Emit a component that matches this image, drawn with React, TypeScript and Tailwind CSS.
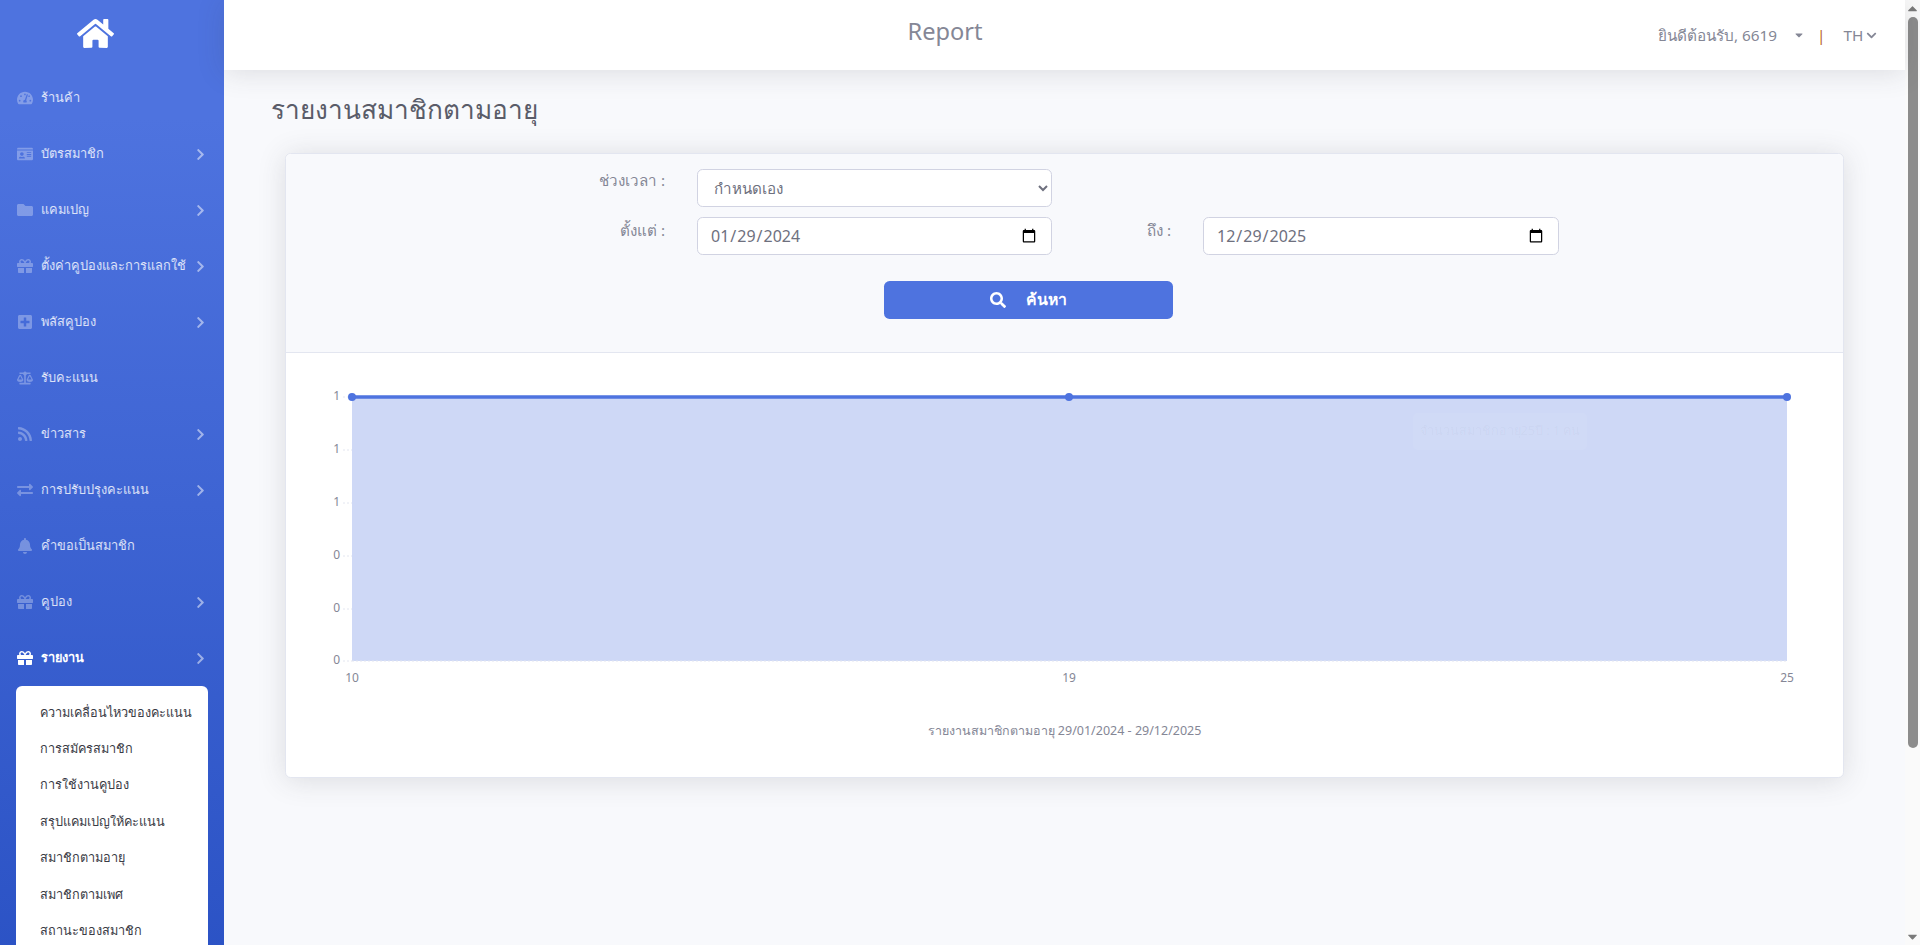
import React from 'react';
import { FaHome, FaTachometerAlt, FaIdCard, FaFolder, FaGift, FaPlusSquare, FaBalanceScale, FaRss, FaExchangeAlt, FaBell, FaChevronRight, FaSearch, FaCaretDown, FaChevronDown, FaCaretUp } from 'react-icons/fa';

const navItems = [
    { label: 'ร้านค้า', icon: FaTachometerAlt, arrow: false },
    { label: 'บัตรสมาชิก', icon: FaIdCard, arrow: true },
    { label: 'แคมเปญ', icon: FaFolder, arrow: true },
    { label: 'ตั้งค่าคูปองและการแลกใช้', icon: FaGift, arrow: true },
    { label: 'พลัสคูปอง', icon: FaPlusSquare, arrow: true },
    { label: 'รับคะแนน', icon: FaBalanceScale, arrow: false },
    { label: 'ข่าวสาร', icon: FaRss, arrow: true },
    { label: 'การปรับปรุงคะแนน', icon: FaExchangeAlt, arrow: true },
    { label: 'คำขอเป็นสมาชิก', icon: FaBell, arrow: false },
    { label: 'คูปอง', icon: FaGift, arrow: true },
];

const subItems = ['ความเคลื่อนไหวของคะแนน', 'การสมัครสมาชิก', 'การใช้งานคูปอง', 'สรุปแคมเปญให้คะแนน', 'สมาชิกตามอายุ', 'สมาชิกตามเพศ', 'สถานะของสมาชิก'];

const yTicks = [
    { y: 27, label: '1' },
    { y: 80, label: '1' },
    { y: 133, label: '1' },
    { y: 186, label: '0' },
    { y: 239, label: '0' },
    { y: 291, label: '0' },
];

const AgeChart: React.FC = () => (
    <svg width="1559" height="340" viewBox="0 0 1559 340" className="block">
        {yTicks.map((t, i) => (
            <g key={i}>
                <line x1="57" x2="66" y1={t.y} y2={t.y} stroke="#e3e6f0" strokeDasharray="2 2" />
                <text x="54" y={t.y + 3} textAnchor="end" fontSize="12" fill="#858796">{t.label}</text>
            </g>
        ))}
        <rect x="66" y="27" width="1435" height="264" fill="#4e73df" fillOpacity="0.28" />
        <line x1="66" x2="1501" y1="291" y2="291" stroke="#e3e6f0" strokeDasharray="2 2" />
        <line x1="66" x2="1501" y1="27" y2="27" stroke="#4e73df" strokeWidth="3.5" />
        <circle cx="66" cy="27" r="4" fill="#4e73df" />
        <circle cx="783" cy="27" r="4" fill="#4e73df" />
        <circle cx="1501" cy="27" r="4" fill="#4e73df" />
        <text x="66" y="312" textAnchor="middle" fontSize="12" fill="#858796">10</text>
        <text x="783" y="312" textAnchor="middle" fontSize="12" fill="#858796">19</text>
        <text x="1501" y="312" textAnchor="middle" fontSize="12" fill="#858796">25</text>
    </svg>
);

const App: React.FC = () => {
    return (
        <div className="flex h-[945px] overflow-hidden bg-[#f8f9fc] text-[#858796] font-['Noto_Sans','DejaVu_Sans',sans-serif]">
            {/* Sidebar */}
            <aside className="w-[224px] h-[1178px] shrink-0 bg-[linear-gradient(180deg,#4e73df_10%,#224abe_100%)]">
                <div className="h-[70px] flex items-center justify-center pr-[34px] text-white">
                    <FaHome className="text-[37px] mb-[4px]" />
                </div>
                {navItems.map((item) => (
                    <div key={item.label} className="h-[56px] flex items-center pl-[17px] pr-[17px] text-[12.8px] text-white/80">
                        <item.icon className="w-[16px] text-[16px] shrink-0 text-white/30" />
                        <span className="ml-[8px] flex-1 whitespace-nowrap">{item.label}</span>
                        {item.arrow && <FaChevronRight className="text-[13px] text-white/50 shrink-0" />}
                    </div>
                ))}
                <div className="h-[56px] flex items-center pl-[17px] pr-[17px] text-[12.8px] font-bold text-white">
                    <FaGift className="w-[16px] text-[16px] shrink-0" />
                    <span className="ml-[8px] flex-1">รายงาน</span>
                    <FaChevronRight className="text-[13px] text-white/50 shrink-0" />
                </div>
                <div className="mx-[16px] pt-[8px] h-[320px] bg-white rounded-[6px]">
                    {subItems.map((s) => (
                        <div key={s} className="h-[36.4px] flex items-center pl-[24px] text-[12.7px] whitespace-nowrap text-[#3a3b45]">{s}</div>
                    ))}
                </div>
            </aside>

            {/* Main */}
            <main className="flex-1 min-w-0 flex flex-col">
                <header className="h-[70px] shrink-0 bg-white shadow-[0_2.4px_28px_0_rgba(58,59,69,0.15)] flex items-center relative z-10">
                    <div className="w-[1434px] pl-[8px] text-center text-[23.6px] mb-[6px]">Report</div>
                    <div className="flex items-center text-[15.3px]">
                        <span className="whitespace-nowrap">ยินดีต้อนรับ, 6619</span>
                        <FaCaretDown className="ml-[16px] text-[12px]" />
                        <span className="ml-[12px] text-[#b8651f]">|</span>
                        <span className="ml-[18px]">TH</span>
                        <FaChevronDown className="ml-[3px] text-[11px]" />
                    </div>
                </header>

                <div className="pl-[47px] pt-[22px] pr-[61px]">
                    <h1 className="text-[26.2px] leading-[34px] text-[#5a5c69] h-[61px]">รายงานสมาชิกตามอายุ</h1>
                    <div className="ml-[14px] bg-white rounded-[5.6px] border border-[#e3e6f0] shadow-[0_2.4px_28px_0_rgba(58,59,69,0.15)] h-[625px]">
                        {/* Filter */}
                        <div className="h-[199px] bg-[#f8f9fc] border-b border-[#e3e6f0] rounded-t-[5.6px] pt-[15px]">
                            <div className="flex items-center h-[38px]">
                                <label className="w-[379px] text-right text-[15.2px] mb-[16px]">ช่วงเวลา :</label>
                                <select defaultValue="custom" className="ml-[32px] w-[355px] h-[38px] bg-white border border-[#d1d3e2] rounded-[5.6px] pl-[12px] pr-[4px] text-[15.2px] text-[#6e707e]">
                                    <option value="custom">กำหนดเอง</option>
                                </select>
                            </div>
                            <div className="flex items-center h-[38px] mt-[10px]">
                                <label className="w-[379px] text-right text-[15.2px] mb-[12px]">ตั้งแต่ :</label>
                                <input type="date" defaultValue="2024-01-29" className="ml-[32px] w-[355px] h-[38px] bg-white border border-[#d1d3e2] rounded-[5.6px] px-[12px] text-[16px] text-[#6e707e]" />
                                <label className="w-[119px] text-right text-[15.2px] mb-[12px]">ถึง :</label>
                                <input type="date" defaultValue="2025-12-29" className="ml-[32px] w-[356px] h-[38px] bg-white border border-[#d1d3e2] rounded-[5.6px] px-[12px] text-[16px] text-[#6e707e]" />
                            </div>
                            <button className="mt-[26px] ml-[598px] w-[289px] h-[38px] bg-[#4e73df] rounded-[5.6px] text-white flex items-center justify-center font-bold text-[15.8px]">
                                <FaSearch className="text-[16px]" />
                                <span className="ml-[20px]">ค้นหา</span>
                            </button>
                        </div>
                        {/* Chart */}
                        <div className="relative pt-[17px]">
                            <AgeChart />
                            <div className="absolute left-[1127px] top-[60px] w-[174px] h-[37px] rounded-[5px] bg-white/[0.05] flex items-center justify-center text-[12.6px] text-[#6e707e]/5 whitespace-nowrap">จำนวนสมาชิกอายุ25ปี : 1 คน</div>
                            <div className="text-center text-[12.5px] mt-[12px]">รายงานสมาชิกตามอายุ 29/01/2024 - 29/12/2025</div>
                        </div>
                    </div>
                </div>
            </main>

            {/* Scrollbar */}
            <div className="w-[15px] shrink-0 bg-[#fafafa] flex flex-col items-center text-[#7a7a7a]">
                <FaCaretUp className="text-[15px] h-[15px] shrink-0 mt-[1px]" />
                <div className="w-[10px] h-[731px] mt-[1px] rounded-[5px] bg-[#8c8c8c]" />
                <div className="flex-1" />
                <FaCaretDown className="text-[15px] h-[15px] shrink-0 mb-[1px]" />
            </div>
        </div>
    );
};

export default App;
